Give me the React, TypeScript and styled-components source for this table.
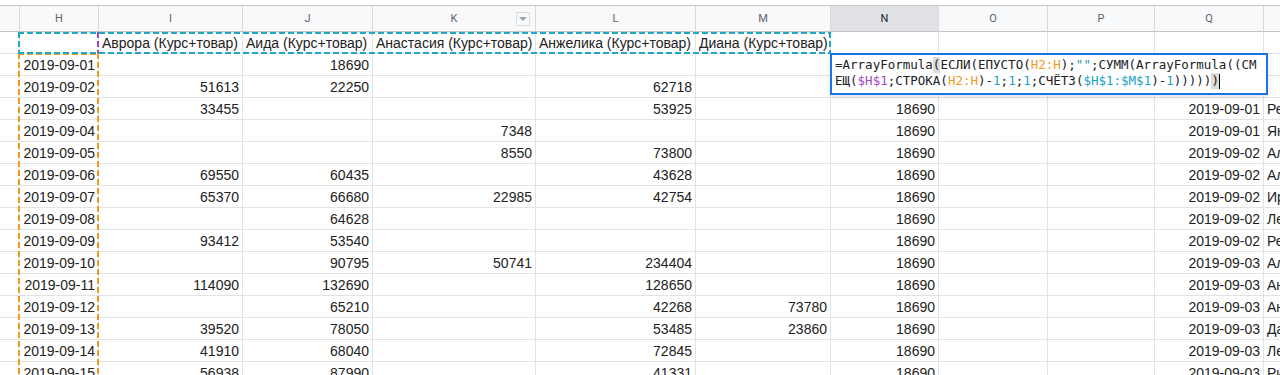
import React from "react";
import styled, { createGlobalStyle } from "styled-components";

const GlobalStyle = createGlobalStyle`
  html, body {
    margin: 0;
    padding: 0;
    background: #fff;
    overflow: hidden;
  }
  body {
    font-family: "Liberation Sans", Arial, sans-serif;
  }
`;

// column widths incl. right border (G is only a sliver at the left edge)
const widths = [20, 79, 144, 130, 163, 160, 135, 108, 109, 107, 109, 200];
const letters = ["G", "H", "I", "J", "K", "L", "M", "N", "O", "P", "Q", "R"];

const Viewport = styled.div`
  position: relative;
  padding-top: 5px;
  width: 1280px;
  height: 375px;
  box-sizing: border-box;
  overflow: hidden;
`;

const Sheet = styled.div`
  display: grid;
  grid-template-columns: ${widths.map((w) => `${w}px`).join(" ")};
  grid-template-rows: 26px;
  grid-auto-rows: 22px;
  border-top: 1px solid #c7c7c7;
  width: max-content;
`;

const Head = styled.div<{ $active?: boolean }>`
  position: relative;
  display: flex;
  align-items: center;
  justify-content: center;
  box-sizing: border-box;
  background: ${(p) => (p.$active ? "#dfe1e5" : "#f8f9fa")};
  border-right: 1px solid #d9d9d9;
  border-bottom: 1px solid #c4c4c4;
  color: ${(p) => (p.$active ? "#202124" : "#5f6368")};
  font-family: Roboto, "Liberation Sans", sans-serif;
  font-size: 11px;
`;

const FilterButton = styled.span`
  position: absolute;
  right: 5px;
  top: 6px;
  width: 12px;
  height: 12px;
  border: 1px solid #dadce0;
  background: #f8f9fa;
  display: flex;
  align-items: center;
  justify-content: center;

  &::after {
    content: "";
    border-left: 4px solid transparent;
    border-right: 4px solid transparent;
    border-top: 4px solid #9aa0a6;
  }
`;

const Cell = styled.div<{ $align: "left" | "right" }>`
  display: flex;
  align-items: center;
  justify-content: ${(p) => (p.$align === "right" ? "flex-end" : "flex-start")};
  box-sizing: border-box;
  padding: 0 3px;
  border-right: 1px solid #e2e3e3;
  border-bottom: 1px solid #e2e3e3;
  font-size: 14px;
  color: #222;
  white-space: nowrap;
  overflow: hidden;
`;

const Marquee = styled.div<{ $color: string; $x: number; $y: number; $w: number; $h: number }>`
  position: absolute;
  left: ${(p) => p.$x}px;
  top: ${(p) => p.$y}px;
  width: ${(p) => p.$w}px;
  height: ${(p) => p.$h}px;
  pointer-events: none;
  background:
    repeating-linear-gradient(90deg, ${(p) => p.$color} 0 6px, transparent 6px 9px) left top / 100% 2px no-repeat,
    repeating-linear-gradient(90deg, ${(p) => p.$color} 0 6px, transparent 6px 9px) left bottom / 100% 2px no-repeat,
    repeating-linear-gradient(180deg, ${(p) => p.$color} 0 6px, transparent 6px 9px) left top / 2px 100% no-repeat,
    repeating-linear-gradient(180deg, ${(p) => p.$color} 0 6px, transparent 6px 9px) right top / 2px 100% no-repeat;
`;

const Editor = styled.div`
  position: absolute;
  left: 830px;
  top: 53px;
  width: 438px;
  height: 42px;
  box-sizing: border-box;
  border: 2px solid #1a73e8;
  background: #fff;
  padding: 2px 3px;
  font-family: "DejaVu Sans Mono", "Liberation Mono", monospace;
  font-size: 12.5px;
  line-height: 16px;
  color: #202124;
  white-space: pre;
  box-shadow: 0 2px 6px rgba(60, 64, 67, 0.15);
`;

const Line = styled.div`
  height: 16px;
  display: flex;
  align-items: center;
`;

const Tok = styled.span<{ $kind?: "orange" | "purple" | "cyan" | "num" | "str" | "match" }>`
  color: ${(p) =>
    p.$kind === "orange"
      ? "#f09a1e"
      : p.$kind === "purple"
      ? "#a046c8"
      : p.$kind === "cyan"
      ? "#17a2c6"
      : p.$kind === "num"
      ? "#1f9fc0"
      : p.$kind === "str"
      ? "#1b9aa8"
      : "inherit"};
  background: ${(p) => (p.$kind === "match" ? "#dcdcdc" : "transparent")};
`;

const Caret = styled.span`
  display: inline-block;
  width: 1px;
  height: 15px;
  background: #000;
`;

type Val = string | number | "";

const header1 = ["", "", "Аврора (Курс+товар)", "Аида (Курс+товар)", "Анастасия (Курс+товар)", "Анжелика (Курс+товар)", "Диана (Курс+товар)"];

// H..M per row (rows 2..16)
const body: Val[][] = [
  ["2019-09-01", "", 18690, "", "", ""],
  ["2019-09-02", 51613, 22250, "", 62718, ""],
  ["2019-09-03", 33455, "", "", 53925, ""],
  ["2019-09-04", "", "", 7348, "", ""],
  ["2019-09-05", "", "", 8550, 73800, ""],
  ["2019-09-06", 69550, 60435, "", 43628, ""],
  ["2019-09-07", 65370, 66680, 22985, 42754, ""],
  ["2019-09-08", "", 64628, "", "", ""],
  ["2019-09-09", 93412, 53540, "", "", ""],
  ["2019-09-10", "", 90795, 50741, 234404, ""],
  ["2019-09-11", 114090, 132690, "", 128650, ""],
  ["2019-09-12", "", 65210, "", 42268, 73780],
  ["2019-09-13", 39520, 78050, "", 53485, 23860],
  ["2019-09-14", 41910, 68040, "", 72845, ""],
  ["2019-09-15", 56938, 87990, "", 41331, ""],
];

// Q and R, starting from row 4
const merged: [string, string][] = [
  ["2019-09-01", "Регина"],
  ["2019-09-01", "Яна"],
  ["2019-09-02", "Алина"],
  ["2019-09-02", "Алла"],
  ["2019-09-02", "Ирина"],
  ["2019-09-02", "Лена"],
  ["2019-09-02", "Регина"],
  ["2019-09-03", "Алина"],
  ["2019-09-03", "Анна"],
  ["2019-09-03", "Анна"],
  ["2019-09-03", "Дарья"],
  ["2019-09-03", "Лена"],
  ["2019-09-03", "Рита"],
];

function buildRow(i: number): { v: Val; align: "left" | "right" }[] {
  const [h, ...rest] = body[i];
  const qr = i >= 2 ? merged[i - 2] : undefined;
  return [
    { v: "", align: "left" },
    { v: h, align: "right" },
    ...rest.map((v) => ({ v, align: "right" as const })),
    { v: 18690, align: "right" },
    { v: "", align: "right" },
    { v: "", align: "right" },
    { v: qr ? qr[0] : "", align: "right" },
    { v: qr ? qr[1] : "", align: "left" },
  ];
}

export default function App() {
  return (
    <>
      <GlobalStyle />
      <Viewport>
        <Sheet>
          {letters.map((l) => (
            <Head key={l} $active={l === "N"}>
              {l === "G" ? "" : l}
              {l === "K" && <FilterButton />}
            </Head>
          ))}
          {letters.map((l, c) => (
            <Cell key={`h-${l}`} $align="left">
              {header1[c] ?? ""}
            </Cell>
          ))}
          {body.map((_, r) =>
            buildRow(r).map((cell, c) => (
              <Cell key={`${r}-${c}`} $align={cell.align}>
                {cell.v}
              </Cell>
            ))
          )}
        </Sheet>

        <Marquee $color="#a046c8" $x={18} $y={32} $w={81} $h={22} />
        <Marquee $color="#f39a1d" $x={18} $y={53} $w={81} $h={400} />
        <Marquee $color="#1fa7c9" $x={18} $y={32} $w={813} $h={22} />

        <Editor>
          <Line>
            =ArrayFormula<Tok $kind="match">(</Tok>ЕСЛИ(ЕПУСТО(<Tok $kind="orange">H2:H</Tok>);
            <Tok $kind="str">""</Tok>;СУММ(ArrayFormula((СМ
          </Line>
          <Line>
            ЕЩ(<Tok $kind="purple">$H$1</Tok>;СТРОКА(<Tok $kind="orange">H2:H</Tok>)-<Tok $kind="num">1</Tok>;
            <Tok $kind="num">1</Tok>;<Tok $kind="num">1</Tok>;СЧЁТЗ(<Tok $kind="cyan">$H$1:$M$1</Tok>)-
            <Tok $kind="num">1</Tok>)))))<Tok $kind="match">)</Tok>
            <Caret />
          </Line>
        </Editor>
      </Viewport>
    </>
  );
}
